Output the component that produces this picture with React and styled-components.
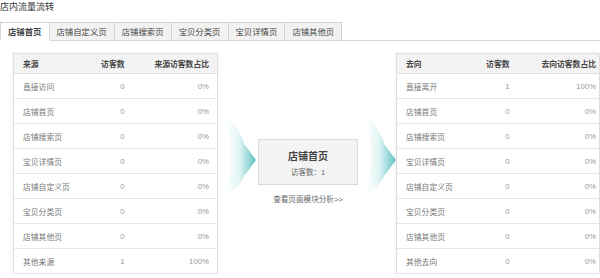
import styled, { createGlobalStyle } from 'styled-components';

const GlobalStyle = createGlobalStyle`
  html, body { margin: 0; padding: 0; background: #fff; }
  body {
    width: 600px;
    height: 278px;
    overflow: hidden;
    font-family: "Liberation Sans", "Noto Sans CJK SC", sans-serif;
    color: #333;
  }
`;

const Page = styled.div`
  width: 600px;
`;

const Title = styled.div`
  height: 22px;
  font-size: 9px;
  line-height: 15px;
  color: #333;
`;

const TabBar = styled.div`
  display: flex;
  height: 18px;
  border-bottom: 1px solid #d9d9d9;
`;

const Tab = styled.div`
  box-sizing: border-box;
  height: 19px;
  padding: 0 7px;
  font-size: 8.4px;
  line-height: 18px;
  color: #444;
  font-weight: ${p => (p.$active ? 'bold' : 'normal')};
  background: ${p => (p.$active ? '#fff' : '#f2f2f2')};
  border: 1px solid #d4d4d4;
  border-left: ${p => (p.$first ? '1px solid #d4d4d4' : 'none')};
  border-bottom: ${p => (p.$active ? '1px solid #fff' : '1px solid #d9d9d9')};
  white-space: nowrap;
`;

const Content = styled.div`
  display: flex;
  padding: 12px 0 0 13px;
`;

const Table = styled.table`
  width: ${p => p.$width}px;
  table-layout: fixed;
  border-collapse: collapse;
  border: 1px solid #dedede;
  box-shadow: 0 0 3px rgba(0, 0, 0, 0.07);
  font-size: 7.8px;
  flex-shrink: 0;
`;

const Th = styled.th`
  height: 19px;
  padding: 0 ${p => p.$pr ?? 8}px 0 ${p => p.$pl ?? 0}px;
  background: #f3f3f3;
  color: #444;
  font-weight: bold;
  text-align: ${p => p.$align || 'right'};
  border-bottom: 1px solid #e2e2e2;
  white-space: nowrap;
`;

const Td = styled.td`
  height: 24px;
  padding: 0 ${p => p.$pr ?? 8}px 0 ${p => p.$pl ?? 0}px;
  color: ${p => (p.$light ? '#999' : '#777')};
  text-align: ${p => p.$align || 'right'};
  border-bottom: 1px solid #e6e6e6;
  white-space: nowrap;
`;

const Middle = styled.div`
  display: flex;
  align-items: flex-start;
  width: 178px;
  padding-top: 62px;
  flex-shrink: 0;
`;

const ArrowSvg = styled.svg`
  display: block;
  flex-shrink: 0;
  margin-left: ${p => p.$ml}px;
`;

const Center = styled.div`
  display: flex;
  flex-direction: column;
  align-items: center;
  margin-top: 24px;
  margin-left: 1px;
`;

const Box = styled.div`
  box-sizing: border-box;
  width: 100px;
  height: 46px;
  background: #f4f4f4;
  border: 1px solid #dadada;
  display: flex;
  flex-direction: column;
  align-items: center;
  justify-content: center;
  gap: 3px;
`;

const BoxTitle = styled.div`
  font-size: 10px;
  font-weight: bold;
  color: #444;
`;

const BoxSub = styled.div`
  font-size: 7.5px;
  color: #666;
`;

const Link = styled.div`
  margin-top: 8px;
  font-size: 7.6px;
  color: #666;
  white-space: nowrap;
`;

const Arrow = ({ ml, id }) => (
  <ArrowSvg $ml={ml} width="34" height="80" viewBox="0 0 34 80">
    <defs>
      <linearGradient id={id} x1="0" y1="0" x2="1" y2="0">
        <stop offset="0" stopColor="#ffffff" />
        <stop offset="0.45" stopColor="#e3f4f4" />
        <stop offset="1" stopColor="#5fc2c2" />
      </linearGradient>
    </defs>
    <path
      d="M2,0 Q17,14 22,31 L22,30 L33,45 L22,60 L22,59 Q17,72 2,80 Q14,40 2,0 Z"
      fill={`url(#${id})`}
    />
  </ArrowSvg>
);

const sources = [
  ['直接访问', '0', '0%'],
  ['店铺首页', '0', '0%'],
  ['店铺搜索页', '0', '0%'],
  ['宝贝详情页', '0', '0%'],
  ['店铺自定义页', '0', '0%'],
  ['宝贝分类页', '0', '0%'],
  ['店铺其他页', '0', '0%'],
  ['其他来源', '1', '100%'],
];

const targets = [
  ['直接离开', '1', '100%'],
  ['店铺首页', '0', '0%'],
  ['店铺搜索页', '0', '0%'],
  ['宝贝详情页', '0', '0%'],
  ['店铺自定义页', '0', '0%'],
  ['宝贝分类页', '0', '0%'],
  ['店铺其他页', '0', '0%'],
  ['其他去向', '0', '0%'],
];

const tabs = ['店铺首页', '店铺自定义页', '店铺搜索页', '宝贝分类页', '宝贝详情页', '店铺其他页'];

const FlowTable = ({ head, rows, width, cols, lastPr }) => (
  <Table $width={width}>
    <colgroup>
      {cols.map((w, i) => <col key={i} style={{ width: w }} />)}
    </colgroup>
    <thead>
      <tr>
        <Th $align="left" $pl={9}>{head[0]}</Th>
        <Th>{head[1]}</Th>
        <Th $pr={lastPr}>{head[2]}</Th>
      </tr>
    </thead>
    <tbody>
      {rows.map(r => (
        <tr key={r[0]}>
          <Td $align="left" $pl={9}>{r[0]}</Td>
          <Td $light>{r[1]}</Td>
          <Td $light $pr={lastPr}>{r[2]}</Td>
        </tr>
      ))}
    </tbody>
  </Table>
);

export default function App() {
  return (
    <>
      <GlobalStyle />
      <Page>
        <Title>店内流量流转</Title>
        <TabBar>
          {tabs.map((t, i) => (
            <Tab key={t} $active={i === 0} $first={i === 0}>{t}</Tab>
          ))}
        </TabBar>
        <Content>
          <FlowTable
            head={['来源', '访客数', '来源访客数占比']}
            rows={sources}
            width={204}
            cols={[80, 39, 85]}
            lastPr={8}
          />
          <Middle>
            <Arrow ml={5} id="ga" />
            <Center>
              <Box>
                <BoxTitle>店铺首页</BoxTitle>
                <BoxSub>访客数：1</BoxSub>
              </Box>
              <Link>查看页面模块分析&gt;&gt;</Link>
            </Center>
            <Arrow ml={5} id="gb" />
          </Middle>
          <FlowTable
            head={['去向', '访客数', '去向访客数占比']}
            rows={targets}
            width={203}
            cols={[75, 46, 82]}
            lastPr={3}
          />
        </Content>
      </Page>
    </>
  );
}
